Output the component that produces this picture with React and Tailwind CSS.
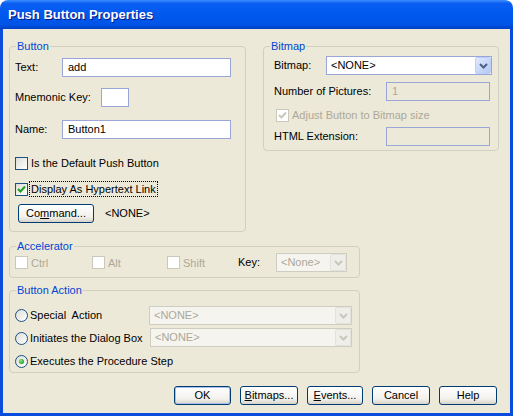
import React from "react";

const Chevron = ({ color }) => (
  <svg width="9" height="6" viewBox="0 0 9 6">
    <path d="M1 1 L4.5 4.5 L8 1" fill="none" stroke={color} strokeWidth="2" />
  </svg>
);

const Group = ({ label, className, children }) => (
  <div className={`relative rounded-[4px] border border-[#D0D0BF] ${className}`}>
    <span className="absolute -top-[7px] left-[6px] bg-[#ECE9D8] px-[1px] leading-[13px] text-[#0046D5]">
      {label}
    </span>
    {children}
  </div>
);

const TextInput = ({ value, disabled, className }) => (
  <div
    className={`flex h-[19px] items-center border border-[#9AA6D8] pl-[5px] ${
      disabled ? "bg-[#ECE9D8] text-[#ACA899]" : "bg-white text-black"
    } ${className}`}
  >
    {value}
  </div>
);

const Select = ({ value, disabled, className }) => (
  <div
    className={`flex h-[19px] items-center border ${
      disabled
        ? "border-[#CFCDC2] bg-[#F5F4EF] text-[#ACA899]"
        : "border-[#9AA6D8] bg-white text-black"
    } ${className}`}
  >
    <span className="flex-1 truncate pl-[4px]">{value}</span>
    <span
      className={`flex h-[17px] w-[16px] items-center justify-center rounded-[2px] border ${
        disabled
          ? "border-[#E3E2DA] bg-[#EFEEE8]"
          : "border-[#BCCDF7] bg-[linear-gradient(135deg,#E0E9FE,#B4C8F7)]"
      }`}
    >
      <Chevron color={disabled ? "#C9C7BA" : "#4D6185"} />
    </span>
  </div>
);

const Check = ({ checked, disabled, label, focus }) => (
  <div className={`flex items-center ${disabled ? "text-[#ACA899]" : "text-black"}`}>
    <span
      className={`flex h-[13px] w-[13px] shrink-0 items-center justify-center border ${
        disabled
          ? "border-[#CAC8BB] bg-white"
          : "border-[#1C5180] bg-[linear-gradient(135deg,#DCDCD7,#FFFFFF)]"
      }`}
    >
      {checked && (
        <svg width="9" height="9" viewBox="0 0 9 9">
          <path
            d="M1 4 L3.5 6.5 L8 1.5"
            fill="none"
            stroke={disabled ? "#CAC8BB" : "#21A121"}
            strokeWidth="2"
          />
        </svg>
      )}
    </span>
    <span
      className={`ml-[2px] px-[1px] leading-[14px] ${
        focus ? "outline outline-1 outline-dotted outline-black" : ""
      }`}
    >
      {label}
    </span>
  </div>
);

const Radio = ({ checked, label, className }) => (
  <div className={`flex items-center ${className}`}>
    <span className="flex h-[13px] w-[13px] shrink-0 items-center justify-center rounded-full border border-[#1C5180] bg-[linear-gradient(135deg,#DCDCD7,#FFFFFF)]">
      {checked && (
        <span className="h-[5px] w-[5px] rounded-full bg-[radial-gradient(circle_at_40%_40%,#8EE88E,#21A121_70%)]" />
      )}
    </span>
    <span className="ml-[2px]">{label}</span>
  </div>
);

const XPButton = ({ children, className, primary }) => (
  <button
    className={`flex h-[19px] items-center justify-center rounded-[3px] border border-[#003C74] bg-[linear-gradient(to_bottom,#FFFFFF,#F2F1EC_70%,#D8D3C8)] leading-none text-black ${
      primary ? "shadow-[inset_0_0_0_1px_#A9C0EE]" : ""
    } ${className}`}
  >
    {children}
  </button>
);

export default function App() {
  return (
    <div className="h-[416px] w-[513px] bg-white font-['Liberation_Sans',Arial,sans-serif] text-[11px] text-black">
      <div className="flex h-full flex-col">
        {/* Title bar */}
        <div className="flex h-[29px] shrink-0 items-center rounded-t-[8px] bg-[linear-gradient(to_bottom,#3B8CFF_0%,#0A5FF2_12%,#0058EE_50%,#0054E6_85%,#0040C4_100%)] pl-[8px]">
          <span className="text-[13px] font-bold text-white [text-shadow:1px_1px_0_#0A1883]">
            Push Button Properties
          </span>
        </div>

        {/* Body */}
        <div className="flex flex-1 flex-col border-x-[3px] border-b-[3px] border-[#0A4CDB] bg-[#ECE9D8] pl-[6px] pt-[17px]">
          <div className="flex items-start gap-[17px]">
            <Group label="Button" className="h-[186px] w-[237px]">
              <div className="flex flex-col pl-[5px] pt-[11px]">
                <div className="flex h-[19px] items-center">
                  <span className="w-[47px]">Text:</span>
                  <TextInput value="add" className="w-[169px]" />
                </div>
                <div className="mt-[11px] flex h-[19px] items-center">
                  <span className="w-[86px]">Mnemonic Key:</span>
                  <TextInput value="" className="w-[28px]" />
                </div>
                <div className="mt-[13px] flex h-[19px] items-center">
                  <span className="w-[47px]">Name:</span>
                  <TextInput value="Button1" className="w-[169px]" />
                </div>
                <div className="mt-[17px]">
                  <Check label="Is the Default Push Button" />
                </div>
                <div className="mt-[12px]">
                  <Check checked focus label="Display As Hypertext Link" />
                </div>
                <div className="mt-[8px] flex items-center">
                  <XPButton className="ml-[3px] w-[76px]">
                    Co<u>m</u>mand...
                  </XPButton>
                  <span className="ml-[11px]">&lt;NONE&gt;</span>
                </div>
              </div>
            </Group>

            <Group label="Bitmap" className="h-[105px] w-[236px]">
              <div className="flex flex-col pl-[10px] pt-[9px]">
                <div className="flex h-[19px] items-center">
                  <span className="w-[52px]">Bitmap:</span>
                  <Select value="<NONE>" className="w-[166px]" />
                </div>
                <div className="mt-[7px] flex h-[19px] items-center">
                  <span className="w-[112px]">Number of Pictures:</span>
                  <TextInput value="1" disabled className="w-[104px]" />
                </div>
                <div className="ml-[2px] mt-[7px]">
                  <Check checked disabled label="Adjust Button to Bitmap size" />
                </div>
                <div className="mt-[5px] flex h-[19px] items-center">
                  <span className="w-[112px]">HTML Extension:</span>
                  <TextInput value="" disabled className="w-[104px]" />
                </div>
              </div>
            </Group>
          </div>

          <Group label="Accelerator" className="mt-[14px] h-[32px] w-[351px]">
            <div className="mt-[6px] flex h-[19px] items-center pl-[5px]">
              <div className="w-[77px]">
                <Check disabled label="Ctrl" />
              </div>
              <div className="w-[75px]">
                <Check disabled label="Alt" />
              </div>
              <div className="w-[71px]">
                <Check disabled label="Shift" />
              </div>
              <span className="w-[38px]">Key:</span>
              <Select value="<None>" disabled className="w-[71px]" />
            </div>
          </Group>

          <Group label="Button Action" className="mt-[12px] h-[83px] w-[351px]">
            <div className="flex flex-col pl-[5px] pt-[15px]">
              <div className="flex items-start">
                <Radio label="Special  Action" className="mt-[1px] w-[134px] whitespace-pre" />
                <Select value="<NONE>" disabled className="w-[203px]" />
              </div>
              <div className="mt-[3px] flex items-start">
                <Radio label="Initiates the Dialog Box" className="mt-[2px] w-[135px]" />
                <Select value="<NONE>" disabled className="w-[202px]" />
              </div>
              <Radio checked label="Executes the Procedure Step" className="mt-[6px]" />
            </div>
          </Group>

          <div className="mt-[13px] flex gap-[9px] pl-[165px]">
            <XPButton primary className="w-[57px]">
              OK
            </XPButton>
            <XPButton className="w-[58px]">
              <u>B</u>itmaps...
            </XPButton>
            <XPButton className="w-[56px]">
              <u>E</u>vents...
            </XPButton>
            <XPButton className="w-[58px]">Cancel</XPButton>
            <XPButton className="w-[58px]">Help</XPButton>
          </div>
        </div>
      </div>
    </div>
  );
}
